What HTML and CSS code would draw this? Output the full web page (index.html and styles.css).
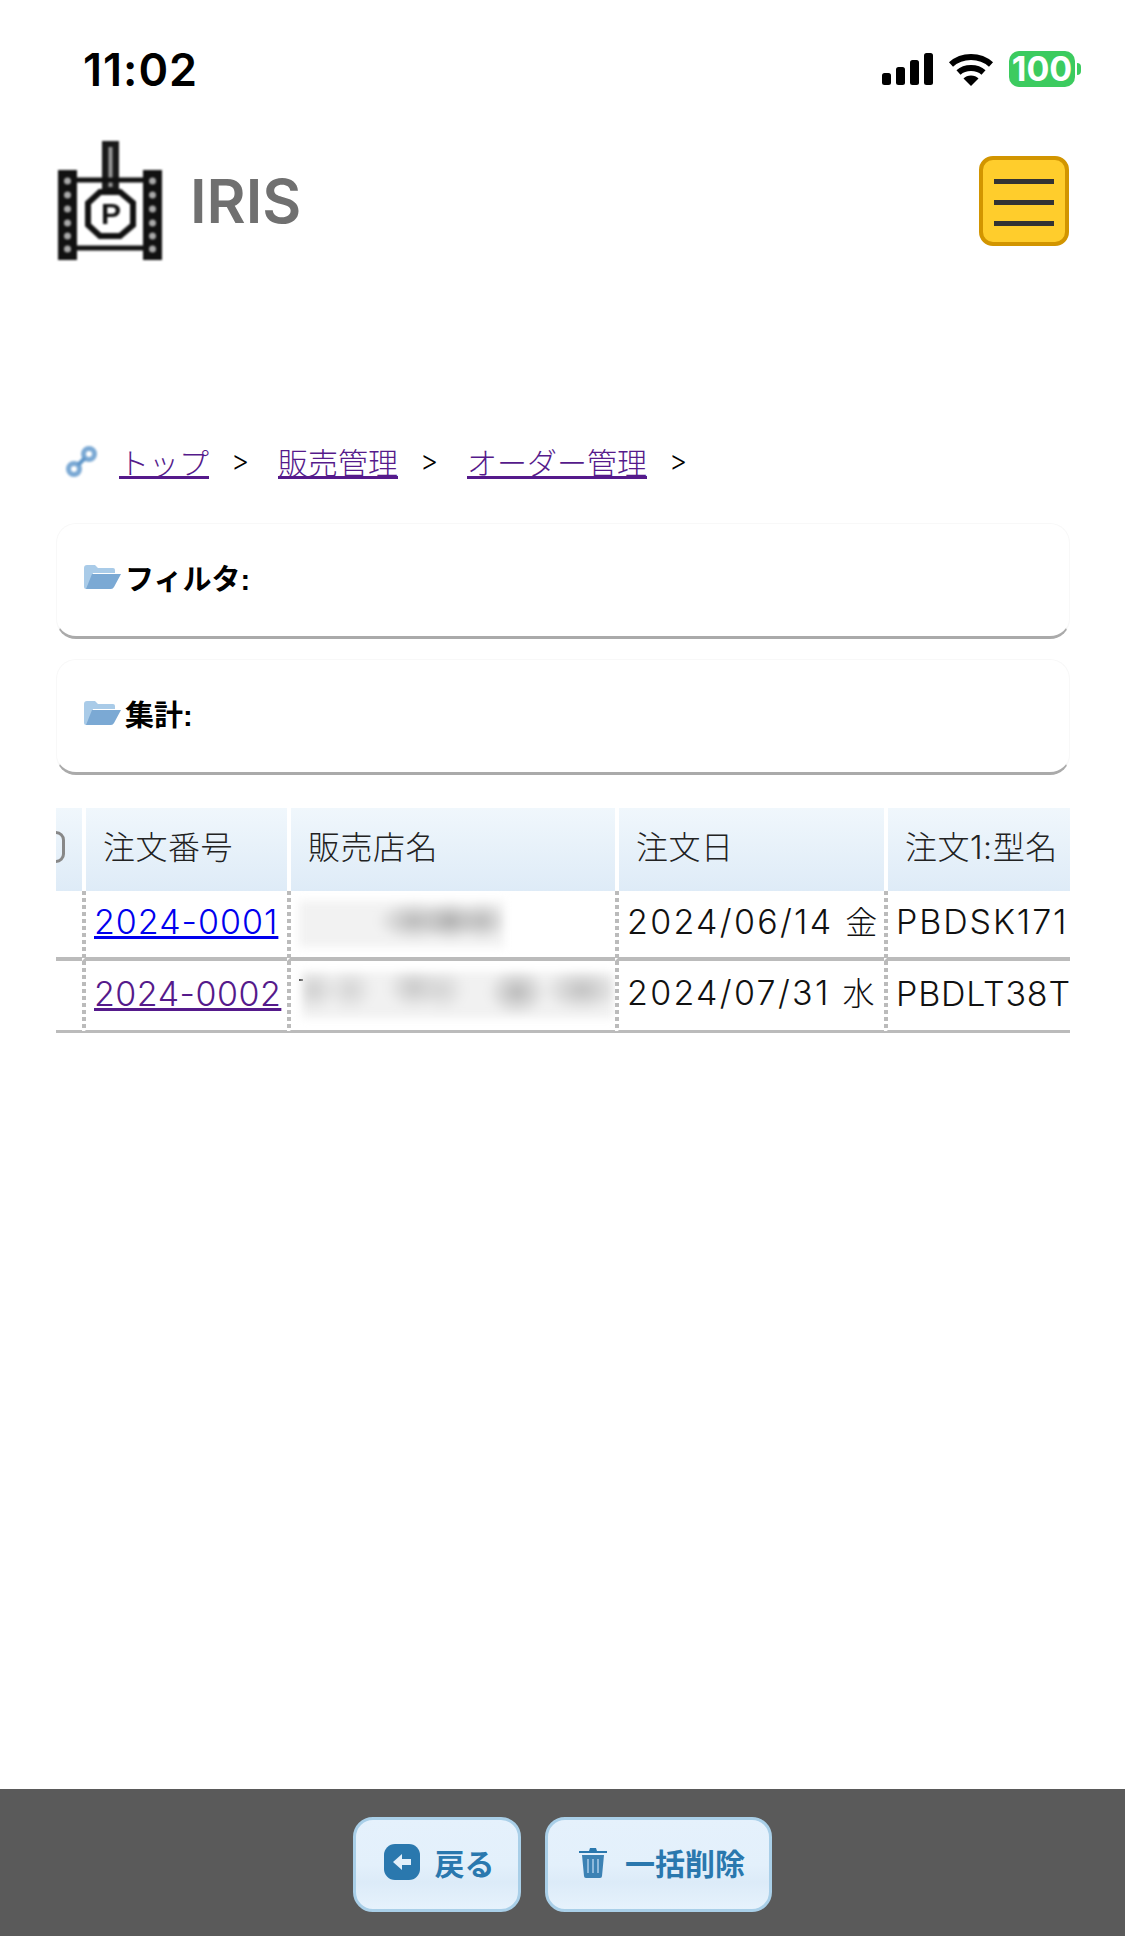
FILE: index.html
```html
<!DOCTYPE html>
<html lang="ja">
<head>
  <meta charset="UTF-8" />
  <meta name="viewport" content="width=device-width, initial-scale=1.0"/>
  <title>IRIS</title>
  <link rel="stylesheet" href="styles.css">
</head>
<body>

<div class="page">

  <div class="status-bar">
    <span class="time">11:02</span>
    <div class="status-icons">
      <svg class="signal" width="51" height="32" viewBox="0 0 51 32">
        <rect x="0" y="20" width="9" height="12" rx="2.5"/>
        <rect x="14" y="14" width="9" height="18" rx="2.5"/>
        <rect x="28" y="7" width="9" height="25" rx="2.5"/>
        <rect x="42" y="0" width="9" height="32" rx="2.5"/>
      </svg>
      <svg class="wifi" width="46" height="33" viewBox="0 0 46 33">
        <path d="M3 11.5 C14 1.5 32 1.5 43 11.5" fill="none" stroke="#000" stroke-width="6"/>
        <path d="M10.5 19.5 C17 13.5 29 13.5 35.5 19.5" fill="none" stroke="#000" stroke-width="6"/>
        <path d="M23 33 L15.500 25.500 C19 21.500 27 21.500 30.500 25.500 Z"/>
      </svg>
      <div class="battery"><span class="battery-level">100</span></div>
      <span class="battery-nub"></span>
    </div>
  </div>

  <div class="header">
    <div class="brand">
      <svg class="logo" width="108" height="120" viewBox="0 0 108 120">
        <rect x="46" y="0" width="17" height="50" fill="#1a1a1a"/>
        <rect x="52.500" y="6" width="4" height="40" fill="#999"/>
        <path d="M20 39H90M20 107H90" stroke="#111" stroke-width="5"/>
        <rect x="2" y="29" width="19" height="90" fill="#111"/>
        <rect x="87" y="29" width="19" height="90" fill="#111"/>
        <g fill="#aaa">
          <circle cx="11.500" cy="40" r="3.500"/><circle cx="11.500" cy="54" r="3.500"/><circle cx="11.500" cy="68" r="3.500"/>
          <circle cx="11.500" cy="82" r="3.500"/><circle cx="11.500" cy="95" r="3.500"/><circle cx="11.500" cy="108" r="3.500"/>
          <circle cx="96.500" cy="40" r="3.500"/><circle cx="96.500" cy="54" r="3.500"/><circle cx="96.500" cy="68" r="3.500"/>
          <circle cx="96.500" cy="82" r="3.500"/><circle cx="96.500" cy="95" r="3.500"/><circle cx="96.500" cy="108" r="3.500"/>
        </g>
        <path d="M44 51H64L77 62V84L64 95H44L32 84V62Z" fill="#fff" stroke="#111" stroke-width="6"/>
        <text x="55" y="83" class="logo-letter">P</text>
      </svg>
      <span class="brand-name">IRIS</span>
    </div>
    <button class="menu-btn" aria-label="menu">
      <span class="menu-line"></span>
      <span class="menu-line"></span>
      <span class="menu-line"></span>
    </button>
  </div>

  <div class="breadcrumb">
    <svg class="crumb-icon" width="34" height="34" viewBox="0 0 34 34">
      <g fill="none" stroke="#7ba9d4" stroke-width="5">
        <circle cx="9" cy="25" r="5.500"/>
        <circle cx="24" cy="10" r="5.500"/>
      </g>
      <path d="M13 21L20 14" stroke="#5f96c9" stroke-width="4"/>
    </svg>
    <a class="crumb-link" href="#">トップ</a>
    <span class="crumb-sep">&gt;</span>
    <a class="crumb-link" href="#">販売管理</a>
    <span class="crumb-sep">&gt;</span>
    <a class="crumb-link" href="#">オーダー管理</a>
    <span class="crumb-sep">&gt;</span>
  </div>

  <div class="panel">
    <svg class="folder" width="37" height="24" viewBox="0 0 37 24">
      <path d="M0 3Q0 0 3 0H11L14 3H29Q31 3 31 5V8H9L4 24H2Q0 24 0 22Z" fill="#a9cbe8"/>
      <path d="M8 9H37L30 22Q29 24 27 24H2Z" fill="#7ba9d4"/>
    </svg>
    <span class="panel-title">フィルタ:</span>
  </div>

  <div class="panel">
    <svg class="folder" width="37" height="24" viewBox="0 0 37 24">
      <path d="M0 3Q0 0 3 0H11L14 3H29Q31 3 31 5V8H9L4 24H2Q0 24 0 22Z" fill="#a9cbe8"/>
      <path d="M8 9H37L30 22Q29 24 27 24H2Z" fill="#7ba9d4"/>
    </svg>
    <span class="panel-title">集計:</span>
  </div>

  <div class="table-wrap">
    <table class="orders">
      <colgroup>
        <col class="col-check"><col class="col-no"><col class="col-shop"><col class="col-date"><col class="col-model">
      </colgroup>
      <thead>
        <tr>
          <th class="check-cell"><span class="checkbox"></span></th>
          <th>注文番号</th>
          <th>販売店名</th>
          <th>注文日</th>
          <th>注文1:型名</th>
        </tr>
      </thead>
      <tbody>
        <tr class="row-first">
          <td></td>
          <td><a class="order-new" href="#">2024-0001</a></td>
          <td><span class="redacted redacted-a"></span></td>
          <td class="date-cell">2024/06/14 <span class="weekday">金</span></td>
          <td class="model-cell">PBDSK171</td>
        </tr>
        <tr class="row-last">
          <td></td>
          <td><a class="order-seen" href="#">2024-0002</a></td>
          <td><span class="stray-mark"></span><span class="redacted redacted-b"></span></td>
          <td class="date-cell">2024/07/31 <span class="weekday">水</span></td>
          <td class="model-cell">PBDLT38T</td>
        </tr>
      </tbody>
    </table>
  </div>

  <div class="footer">
    <button class="action-btn btn-back">
      <svg width="36" height="36" viewBox="0 0 36 36">
        <rect width="36" height="36" rx="11" fill="#2a78ae"/>
        <path d="M9 18L18 10V15H27V21H18V26Z" fill="#e3f0fb"/>
      </svg>
      戻る
    </button>
    <button class="action-btn btn-delete">
      <svg width="30" height="32" viewBox="0 0 30 32">
        <path d="M1 5H11L12 2H18L19 5H29V7H1Z" fill="#2a78ae"/>
        <path d="M4 9H26L24 30Q24 32 22 32H8Q6 32 6 30Z" fill="#3c82b4"/>
        <path d="M10 13V27M15 13V27M20 13V27" stroke="#a9cbe8" stroke-width="1.500"/>
      </svg>
      一括削除
    </button>
  </div>

</div>

</body>
</html>
```

FILE: styles.css
```css
* {
  box-sizing: border-box;
}

body {
  margin: 0;
  background-color: #fff;
  font-family: "Inter", "Noto Sans CJK JP", sans-serif;
  color: #111;
}

.page {
  display: flex;
  flex-direction: column;
  height: 100vh;
  overflow: hidden;
}

/* status bar */
.status-bar {
  display: flex;
  justify-content: space-between;
  align-items: center;
  height: 138px;
  padding: 0 44px 0 83px;
}

.time {
  font-size: 45px;
  font-weight: 600;
  letter-spacing: 1px;
  color: #000;
}

.status-icons {
  display: flex;
  align-items: center;
}

.signal {
  margin-right: 15px;
}

.wifi {
  margin-right: 15px;
}

.battery {
  display: flex;
  justify-content: center;
  align-items: center;
  width: 66px;
  height: 36px;
  background-color: #3ccb5f;
  border-radius: 10px;
}

.battery-level {
  color: #fff;
  font-size: 34px;
  font-weight: 700;
  line-height: 1;
}

.battery-nub {
  width: 4px;
  height: 12px;
  margin-left: 2px;
  background-color: #3ccb5f;
  border-radius: 0 6px 6px 0;
}

/* header */
.header {
  display: flex;
  justify-content: space-between;
  align-items: center;
  padding: 3px 56px 0 56px;
  height: 122px;
}

.brand {
  display: flex;
  align-items: center;
  gap: 26px;
}

.logo {
  filter: blur(1px);
}

.logo-letter {
  font-family: "Liberation Sans", sans-serif;
  font-size: 30px;
  font-weight: 700;
  text-anchor: middle;
  fill: #111;
}

.brand-name {
  font-family: "Inter", sans-serif;
  font-size: 60px;
  font-weight: 600;
  color: #707070;
}

.menu-btn {
  display: flex;
  flex-direction: column;
  justify-content: center;
  align-items: center;
  gap: 16px;
  width: 90px;
  height: 90px;
  padding: 4px 0 0;
  background-color: #ffcd2c;
  border: 4px solid #d29500;
  border-radius: 14px;
}

.menu-line {
  width: 60px;
  height: 5px;
  background-color: #333;
}

/* breadcrumb */
.breadcrumb {
  display: flex;
  align-items: center;
  height: 50px;
  margin-top: 176px;
  padding-left: 65px;
  font-family: "Noto Sans CJK JP", sans-serif;
  font-size: 30px;
  font-weight: 300;
}

.crumb-icon {
  margin-right: 20px;
  filter: blur(0.8px);
}

.crumb-link {
  color: #551a8b;
}

.crumb-sep {
  width: 69px;
  padding-left: 22px;
  color: #000;
  font-family: "Inter", sans-serif;
  font-size: 28px;
}

/* collapsed panels */
.panel {
  display: flex;
  align-items: center;
  gap: 4px;
  height: 116px;
  margin: 0 55px 20px 56px;
  padding: 0 0 6px 27px;
  background-color: #fff;
  border: 1px solid #f8f8f8;
  border-bottom: 3px solid #aaa;
  border-radius: 20px;
}

.breadcrumb + .panel {
  margin-top: 37px;
}

.panel-title {
  font-family: "Liberation Sans", "Noto Sans CJK JP", sans-serif;
  font-size: 29px;
  font-weight: 700;
  color: #000;
}

.folder {
  filter: blur(0.4px);
}

/* orders table */
.table-wrap {
  width: 1014px;
  margin: 13px 0 0 56px;
  overflow: hidden;
}

.orders {
  width: 1162px;
  margin-left: -34px;
  table-layout: fixed;
  border-collapse: separate;
  border-spacing: 0;
  font-size: 32px;
  font-weight: 300;
}

.col-check { width: 60px; }
.col-no { width: 205px; }
.col-shop { width: 328px; }
.col-date { width: 269px; }
.col-model { width: 300px; }

.orders th {
  height: 83px;
  padding: 0 0 10px 17px;
  background: linear-gradient(#f0f7fc, #deebf7);
  border-left: 4px solid #fff;
  color: #222;
  font-weight: 300;
  letter-spacing: 0.5px;
  text-align: left;
}

.orders th.check-cell {
  padding: 0 17px 10px 0;
  border-left: none;
  text-align: right;
}

.checkbox {
  display: inline-block;
  width: 32px;
  height: 32px;
  border: 3px solid #888;
  border-radius: 9px;
  vertical-align: middle;
}

.orders td {
  padding: 0 0 4px 8px;
  overflow: hidden;
  white-space: nowrap;
  font-size: 34px;
  line-height: 44px;
  letter-spacing: 1px;
  background-image: repeating-linear-gradient(#bbb 0 4px, transparent 4px 7px);
  background-size: 4px 100%;
  background-repeat: no-repeat;
  background-position: left top;
  background-origin: border-box;
  background-clip: border-box;
  border-left: 4px solid transparent;
}

.orders td:first-child {
  background-image: none;
}

.orders td.date-cell {
  letter-spacing: 2.3px;
}

.orders td.model-cell {
  letter-spacing: 1.9px;
}

.orders .row-last td.model-cell {
  letter-spacing: 0.8px;
}

.weekday {
  font-size: 32px;
  letter-spacing: 0;
}

.row-first td {
  height: 70px;
  border-bottom: 4px solid #bbb;
}

.row-last td {
  height: 72px;
  border-bottom: 3px solid #bbb;
}

.order-new {
  color: #0000ee;
}

.order-seen {
  color: #551a8b;
  letter-spacing: 0.5px;
}

/* blurred shop names */
.redacted {
  display: block;
  height: 46px;
  margin-top: 3px;
  filter: blur(4px);
}

.redacted-a {
  width: 205px;
  background:
    radial-gradient(ellipse 38px 20px at 115px 20px, #b8b8b8, transparent),
    radial-gradient(ellipse 30px 20px at 151px 20px, #aaa, transparent),
    radial-gradient(ellipse 26px 20px at 183px 20px, #b8b8b8, transparent),
    #f2f2f2;
}

.redacted-b {
  width: 312px;
  margin-left: 3px;
  background:
    radial-gradient(ellipse 24px 22px at 12px 18px, #cfcfcf, transparent),
    radial-gradient(ellipse 24px 22px at 48px 18px, #d4d4d4, transparent),
    radial-gradient(ellipse 28px 22px at 112px 16px, #c8c8c8, transparent),
    radial-gradient(ellipse 24px 22px at 140px 18px, #d4d4d4, transparent),
    radial-gradient(ellipse 30px 24px at 215px 20px, #b8b8b8, transparent),
    radial-gradient(ellipse 40px 22px at 280px 18px, #c0c0c0, transparent),
    #f1f1f1;
}

.stray-mark {
  display: block;
  width: 4px;
  height: 2px;
  margin: 10px 0 -12px;
  background-color: #222;
}

/* footer */
.footer {
  display: flex;
  justify-content: center;
  gap: 24px;
  height: 147px;
  margin-top: auto;
  padding-top: 28px;
  padding-right: 1px;
  background-color: #5a5a5a;
}

.action-btn {
  display: flex;
  align-items: center;
  justify-content: center;
  height: 95px;
  padding: 0 0 6px;
  background: linear-gradient(#e5f1fc 0%, #e3f0fb 50%, #dcebf8 70%, #e6f2fc 100%);
  border: 3px solid #a9cfe8;
  border-radius: 20px;
  color: #2a78ae;
  font-family: "Noto Sans CJK JP", sans-serif;
  font-size: 30px;
  font-weight: 700;
}

.btn-back {
  gap: 15px;
  width: 168px;
  padding-left: 5px;
}

.btn-delete {
  gap: 17px;
  width: 227px;
  padding-left: 7px;
}
```
